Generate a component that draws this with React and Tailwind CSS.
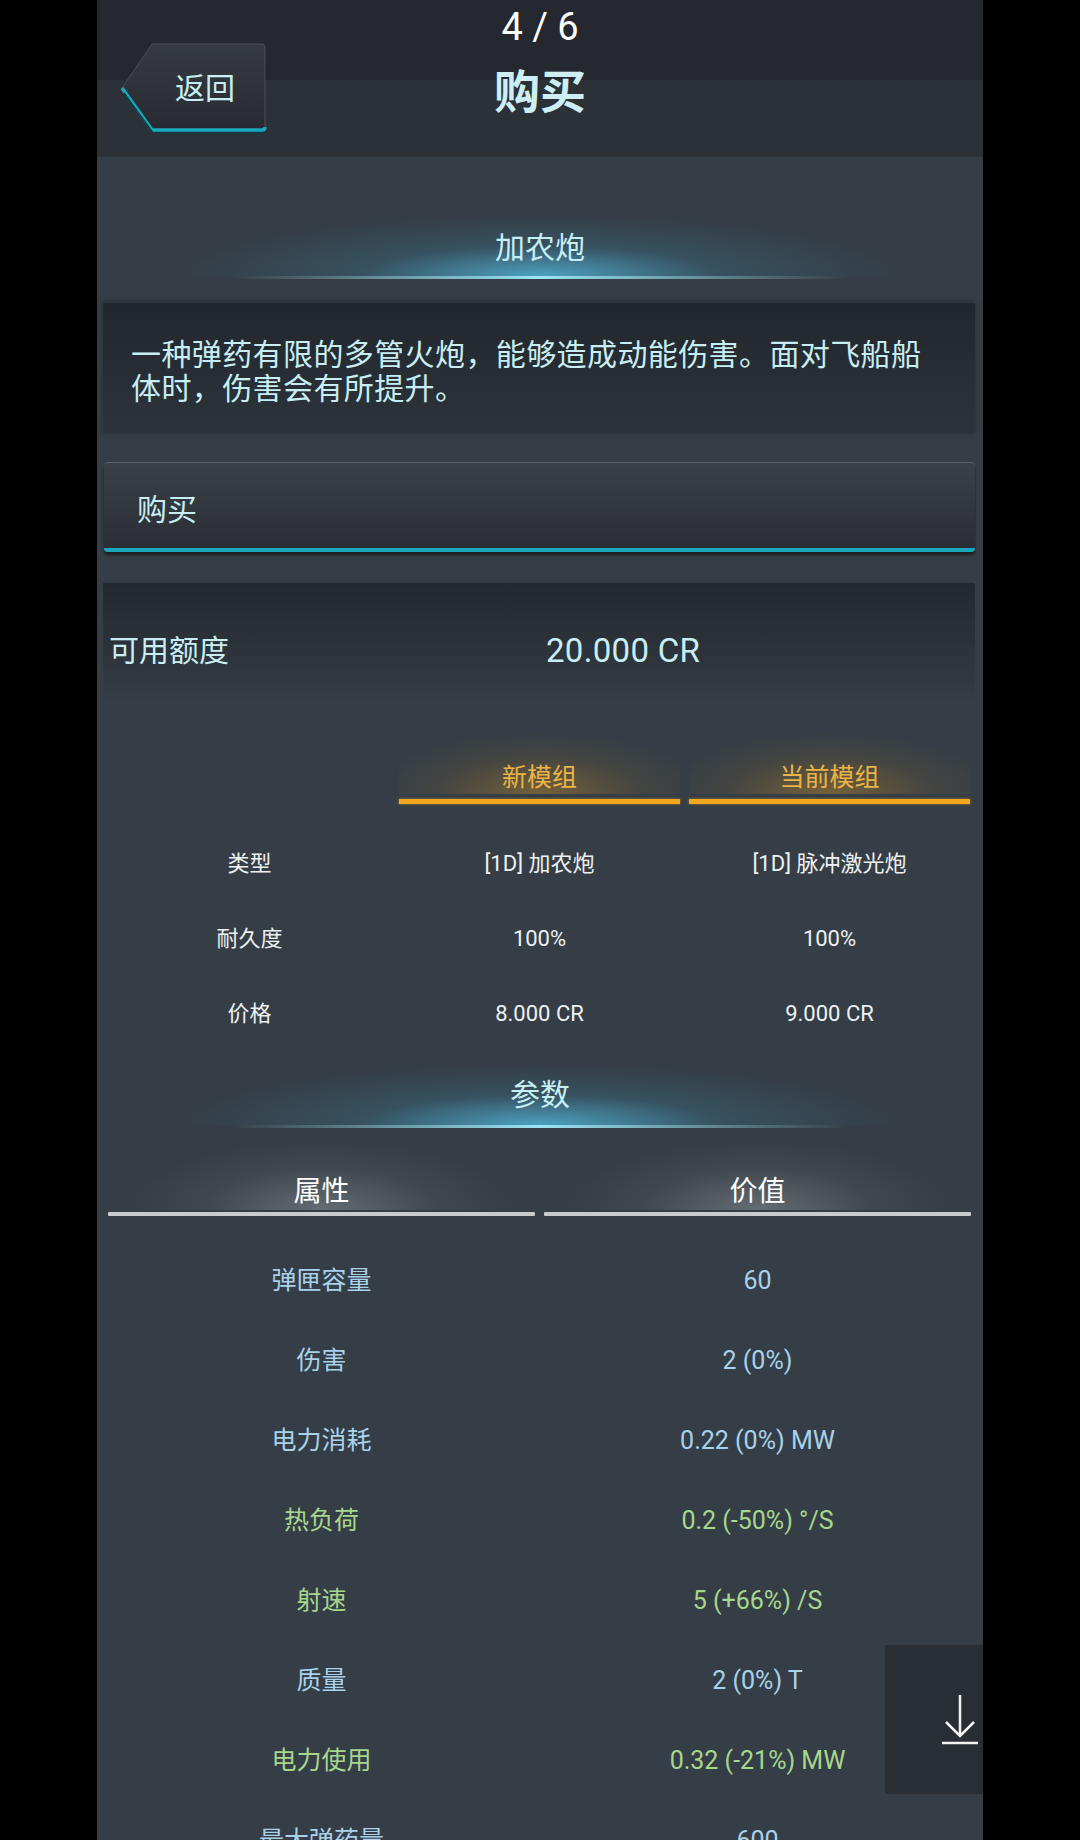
const font = { fontFamily: 'Roboto, "Noto Sans CJK SC", sans-serif' };

const compareRows = [
  { label: '类型', next: '[1D] 加农炮', cur: '[1D] 脉冲激光炮' },
  { label: '耐久度', next: '100%', cur: '100%' },
  { label: '价格', next: '8.000 CR', cur: '9.000 CR' },
];

const stats = [
  { name: '弹匣容量', value: '60' },
  { name: '伤害', value: '2 (0%)' },
  { name: '电力消耗', value: '0.22 (0%) MW' },
  { name: '热负荷', value: '0.2 (-50%) °/S', good: true },
  { name: '射速', value: '5 (+66%) /S', good: true },
  { name: '质量', value: '2 (0%) T' },
  { name: '电力使用', value: '0.32 (-21%) MW', good: true },
  { name: '最大弹药量', value: '600' },
];

function BackButton() {
  return (
    <div className="relative w-[147px] h-[92px]">
      <svg className="absolute inset-0" width="147" height="92" viewBox="0 0 147 92">
        <defs>
          <linearGradient id="bb" x1="0" y1="0" x2="0" y2="1">
            <stop offset="0" stopColor="#363a41" />
            <stop offset="1" stopColor="#272b31" />
          </linearGradient>
        </defs>
        <path d="M32 1 H142 Q145 1 145 4 V84 Q145 87 142 87 H32 L2 45 Z" fill="url(#bb)" stroke="#484d55" strokeWidth="1" />
        <path d="M2 45 L32 87 H142 Q145 87 145 84" fill="none" stroke="#18a9bf" strokeWidth="3.5" />
        <path d="M4 50 L33 90 H143" fill="none" stroke="#0c3c45" strokeWidth="1.5" />
      </svg>
      <span className="absolute left-[55px] top-[26px] text-[30px] leading-[40px] text-[#c8eef3]">返回</span>
    </div>
  );
}

function GlowHeading({ children, pb }) {
  return (
    <div>
      <div className={`h-[60px] flex items-end justify-center ${pb} bg-[radial-gradient(ellipse_40%_100%_at_50%_100%,rgba(85,200,240,0.72),rgba(60,150,190,0.22)_50%,transparent_100%)]`}>
        <span className="text-[30px] leading-[36px] text-[#c5eef5]">{children}</span>
      </div>
      <div className="h-[3px] bg-[linear-gradient(90deg,transparent_15%,#9be6f7_50%,transparent_85%)]" />
    </div>
  );
}

export default function App() {
  return (
    <div className="w-full h-[1840px] bg-black overflow-hidden" style={font}>
      <div className="relative mx-auto w-[886px] h-[1840px] bg-[#353e46]">
        {/* header */}
        <div className="relative h-[157px] bg-[linear-gradient(180deg,#25282e_0,#25282e_80px,#2c3037_80px,#2c3037_100%)]">
          <div className="absolute left-0 right-0 top-[4px] text-center text-[38px] leading-[46px] text-white">4 / 6</div>
          <div className="pt-[43px] pl-[23px] flex items-start">
            <BackButton />
          </div>
          <div className="absolute left-0 right-0 top-[64px] text-center text-[46px] leading-[56px] font-bold text-[#cdeff4]">购买</div>
        </div>

        <div className="mt-[59px]">
          <GlowHeading pb="pb-[10px]">加农炮</GlowHeading>
        </div>

        {/* description */}
        <div className="mt-[24px] ml-[6px] mr-[8px] pl-[28px] pr-[40px] pt-[35px] pb-[28px] bg-[linear-gradient(180deg,#22272d,#2c333a)] shadow-[0_-2px_6px_rgba(0,0,0,0.25)]">
          <p className="text-[30px] leading-[34px] tracking-[0.4px] text-[#c8eef3]">
            一种弹药有限的多管火炮，能够造成动能伤害。面对飞船船体时，伤害会有所提升。
          </p>
        </div>

        {/* buy button */}
        <div className="mt-[28px] ml-[7px] mr-[8px] h-[90px] flex items-center pl-[33px] pt-[8px] rounded-[4px] border-t border-[#5a6068] border-b-[4px] border-b-[#19a6bd] bg-[linear-gradient(180deg,#3b4047,#2a2e34)] shadow-[0_3px_3px_rgba(0,0,0,0.5)]">
          <span className="text-[30px] leading-[40px] text-[#c8eef3]">购买</span>
        </div>

        {/* credit */}
        <div className="mt-[31px] ml-[6px] mr-[8px] h-[121px] pt-[48px] pl-[6px] grid grid-cols-[437px_1fr] bg-[linear-gradient(180deg,#23282e,#2f363d_70%,#353e46)]">
          <span className="text-[30px] leading-[40px] text-[#c8eef3]">可用额度</span>
          <span className="text-[33px] leading-[40px] tracking-[0.3px] text-[#c8eef3]">20.000 CR</span>
        </div>

        {/* compare table */}
        <div className="grid grid-cols-[293px_281px_281px] gap-x-[9px]">
          <div />
          {['新模组', '当前模组'].map((t) => (
            <div key={t} className="mt-[28px]">
              <div className="h-[62px] flex items-end justify-center bg-[radial-gradient(ellipse_60%_100%_at_50%_100%,rgba(205,145,40,0.42),rgba(180,120,30,0.12)_60%,transparent_100%)]">
                <span className="text-[25px] leading-[32px] text-[#eab446]">{t}</span>
              </div>
              <div className="mt-[5px] h-[5px] bg-[#f2a820] shadow-[0_0_3px_rgba(242,168,32,0.6)]" />
            </div>
          ))}
        </div>
        <div className="mt-[22px]">
          {compareRows.map((r) => (
            <div key={r.label} className="h-[75px] grid grid-cols-[293px_281px_281px] gap-x-[9px] items-center text-[22px] text-[#eef1f2]">
              <span className="text-center pl-[12px]">{r.label}</span>
              <span className="text-center">{r.next}</span>
              <span className="text-center">{r.cur}</span>
            </div>
          ))}
        </div>

        <div className="mt-[14px]">
          <GlowHeading pb="pb-[12px]">参数</GlowHeading>
        </div>

        {/* stats header */}
        <div className="mt-[12px] ml-[11px] mr-[12px] grid grid-cols-2 gap-x-[9px]">
          {['属性', '价值'].map((t) => (
            <div key={t}>
              <div className="h-[70px] flex items-end justify-center bg-[radial-gradient(ellipse_45%_100%_at_50%_100%,rgba(200,205,210,0.32),rgba(180,185,190,0.08)_60%,transparent_100%)]">
                <span className="text-[28px] leading-[36px] text-white">{t}</span>
              </div>
              <div className="mt-[2px] h-[4px] rounded-[1px] bg-[#c9cccf]" />
            </div>
          ))}
        </div>

        <div className="mt-[25px] ml-[11px] mr-[12px]">
          {stats.map((s) => (
            <div key={s.name} className={`h-[80px] grid grid-cols-2 gap-x-[9px] items-center text-[25px] ${s.good ? 'text-[#a7d78c]' : 'text-[#a9d2ea]'}`}>
              <span className="text-center">{s.name}</span>
              <span className="text-center">{s.value}</span>
            </div>
          ))}
        </div>

        {/* scroll-down button */}
        <div className="absolute right-0 top-[1645px] w-[98px] h-[149px] bg-[#292e34]">
          <svg className="absolute left-0 top-0" width="98" height="149" viewBox="0 0 98 149">
            <path d="M75 50 V90 M61 77 L75 91 L89 77 M57 98 H93" fill="none" stroke="#f2f2f2" strokeWidth="2.5" />
          </svg>
        </div>
      </div>
    </div>
  );
}
